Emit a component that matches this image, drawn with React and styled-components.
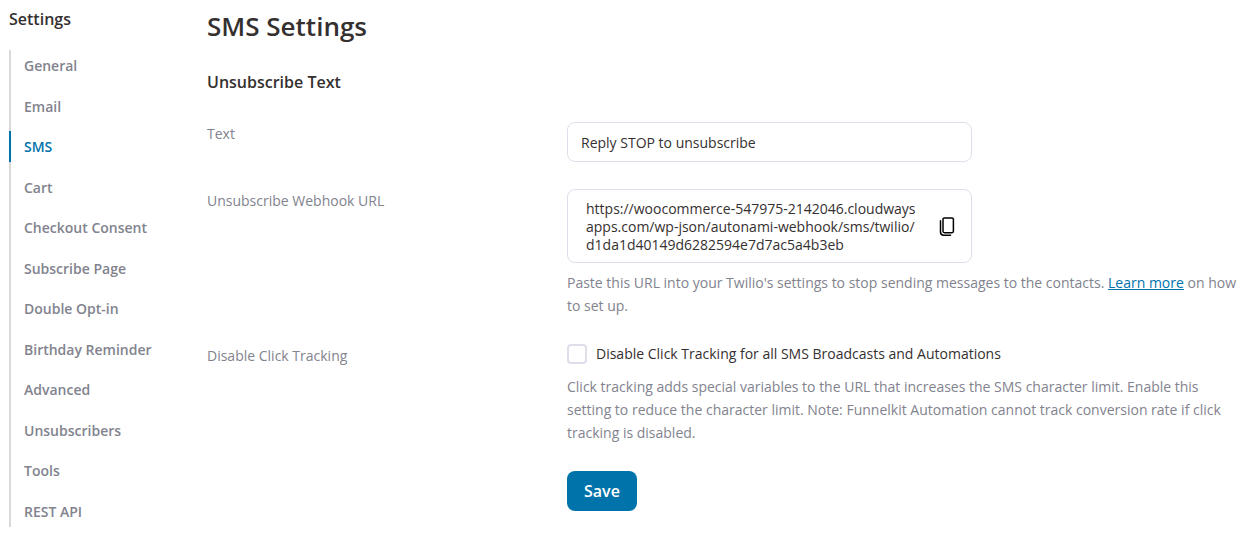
import React, { useState } from 'react';
import styled, { createGlobalStyle } from 'styled-components';

const GlobalStyle = createGlobalStyle`
  * {
    box-sizing: border-box;
  }
  body {
    margin: 0;
    background: #ffffff;
    color: #353030;
    font-family: 'Segoe UI', 'Open Sans', 'Noto Sans', sans-serif;
    font-size: 14px;
    line-height: 22px;
  }
`;

// Page Layout
const Page = styled.div`
  display: flex;
  padding: 8px 0 8px 9px;
`;

const Sidebar = styled.aside`
  display: flex;
  flex-direction: column;
  flex: 0 0 198px;
`;

const Content = styled.main`
  flex: 1;
  min-width: 0;
  padding-bottom: 16px;
`;

// Sidebar Styles
const SidebarTitle = styled.h2`
  margin: 0 0 20px;
  font-size: 16px;
  line-height: 22px;
  font-weight: 600;
`;

const Nav = styled.nav`
  flex: 1;
  display: flex;
  flex-direction: column;
  justify-content: space-between;
  border-left: 2px solid #d9d9d9;
`;

const NavLink = styled.a`
  margin-left: -2px;
  padding-left: 13px;
  border-left: 2px solid ${({ $active }) => ($active ? '#0073aa' : 'transparent')};
  color: ${({ $active }) => ($active ? '#0073aa' : '#82838e')};
  font-weight: 600;
  line-height: 31px;
  text-decoration: none;
`;

// Form Styles
const Title = styled.h1`
  margin: 0 0 27px;
  font-size: 26px;
  line-height: 36px;
  font-weight: 600;
`;

const SectionTitle = styled.h3`
  margin: 0 0 29px;
  font-size: 16px;
  line-height: 22px;
  font-weight: 600;
`;

const Form = styled.form`
  display: flex;
  flex-direction: column;
  gap: 27px;
`;

const Row = styled.div`
  display: grid;
  grid-template-columns: 360px minmax(0, 1fr);
`;

const RowLabel = styled.label`
  padding-top: 1px;
  color: #82838e;
`;

const TextInput = styled.input`
  display: block;
  width: 100%;
  max-width: 405px;
  height: 40px;
  padding: 0 13px;
  border: 1px solid #dedfea;
  border-radius: 8px;
  background: #ffffff;
  color: #353030;
  font: inherit;
`;

const UrlBox = styled.div`
  display: flex;
  align-items: center;
  justify-content: space-between;
  max-width: 405px;
  padding: 10px 12px 8px 18px;
  border: 1px solid #dedfea;
  border-radius: 8px;
`;

const Url = styled.output`
  width: 332px;
  line-height: 18px;
  word-break: break-all;
`;

const CopyButton = styled.button`
  display: flex;
  padding: 2px;
  border: 0;
  background: none;
  color: #000000;
  cursor: pointer;
`;

const Help = styled.p`
  margin: ${({ $top }) => $top}px 0 0;
  color: #82838e;
  line-height: 23px;
`;

const HelpLink = styled.a`
  color: #0073aa;
`;

const CheckLabel = styled.label`
  display: flex;
  align-items: center;
  gap: 9px;
  line-height: 20px;
`;

const Checkbox = styled.input`
  appearance: none;
  flex: none;
  width: 20px;
  height: 20px;
  margin: 0;
  border: 2px solid #dedfea;
  border-radius: 4px;
  background: #ffffff;
  &:checked {
    border-color: #0073aa;
    background: #0073aa;
  }
`;

const SaveButton = styled.button`
  justify-self: start;
  grid-column: 2;
  height: 40px;
  padding: 0 17px;
  border: 0;
  border-radius: 8px;
  background: #0073aa;
  color: #ffffff;
  font: inherit;
  font-size: 16px;
  font-weight: 600;
  cursor: pointer;
`;

const CopyIcon = () => (
  <svg width="20" height="20" viewBox="0 0 20 20" fill="none" stroke="currentColor" strokeWidth="1.5">
    <rect x="6" y="0.9" width="10.4" height="14.8" rx="1.4" />
    <path d="M3.5 3.8v11.2a3.2 3.2 0 0 0 3.2 3.2h6.8" strokeLinecap="round" />
  </svg>
);

const tabs = [
  'General',
  'Email',
  'SMS',
  'Cart',
  'Checkout Consent',
  'Subscribe Page',
  'Double Opt-in',
  'Birthday Reminder',
  'Advanced',
  'Unsubscribers',
  'Tools',
  'REST API',
];

const webhookUrl =
  'https://woocommerce-547975-2142046.cloudwaysapps.com/wp-json/autonami-webhook/sms/twilio/d1da1d40149d6282594e7d7ac5a4b3eb';

const SettingsSidebar = () => (
  <Sidebar>
    <SidebarTitle>Settings</SidebarTitle>
    <Nav>
      {tabs.map((tab) => (
        <NavLink key={tab} href="#" $active={tab === 'SMS'}>
          {tab}
        </NavLink>
      ))}
    </Nav>
  </Sidebar>
);

const SmsSettings = () => {
  const [text, setText] = useState('Reply STOP to unsubscribe');
  const [disabled, setDisabled] = useState(false);

  return (
    <Content>
      <Title>SMS Settings</Title>
      <SectionTitle>Unsubscribe Text</SectionTitle>

      <Form onSubmit={(e) => e.preventDefault()}>
        <Row>
          <RowLabel htmlFor="unsubscribe-text">Text</RowLabel>
          <TextInput
            id="unsubscribe-text"
            type="text"
            value={text}
            onChange={(e) => setText(e.target.value)}
          />
        </Row>

        <Row>
          <RowLabel htmlFor="webhook-url">Unsubscribe Webhook URL</RowLabel>
          <div>
            <UrlBox>
              <Url id="webhook-url">{webhookUrl}</Url>
              <CopyButton
                type="button"
                aria-label="Copy URL"
                onClick={() => navigator.clipboard.writeText(webhookUrl)}
              >
                <CopyIcon />
              </CopyButton>
            </UrlBox>
            <Help $top={8}>
              Paste this URL into your Twilio's settings to stop sending messages to the contacts.{' '}
              <HelpLink href="#">Learn more</HelpLink> on how to set up.
            </Help>
          </div>
        </Row>

        <Row>
          <RowLabel htmlFor="disable-tracking">Disable Click Tracking</RowLabel>
          <div>
            <CheckLabel>
              <Checkbox
                id="disable-tracking"
                type="checkbox"
                checked={disabled}
                onChange={(e) => setDisabled(e.target.checked)}
              />
              Disable Click Tracking for all SMS Broadcasts and Automations
            </CheckLabel>
            <Help $top={11}>
              Click tracking adds special variables to the URL that increases the SMS character
              limit. Enable this setting to reduce the character limit. Note: Funnelkit Automation
              cannot track conversion rate if click tracking is disabled.
            </Help>
          </div>
        </Row>

        <Row>
          <SaveButton type="submit">Save</SaveButton>
        </Row>
      </Form>
    </Content>
  );
};

const App = () => (
  <>
    <GlobalStyle />
    <Page>
      <SettingsSidebar />
      <SmsSettings />
    </Page>
  </>
);

export default App;
